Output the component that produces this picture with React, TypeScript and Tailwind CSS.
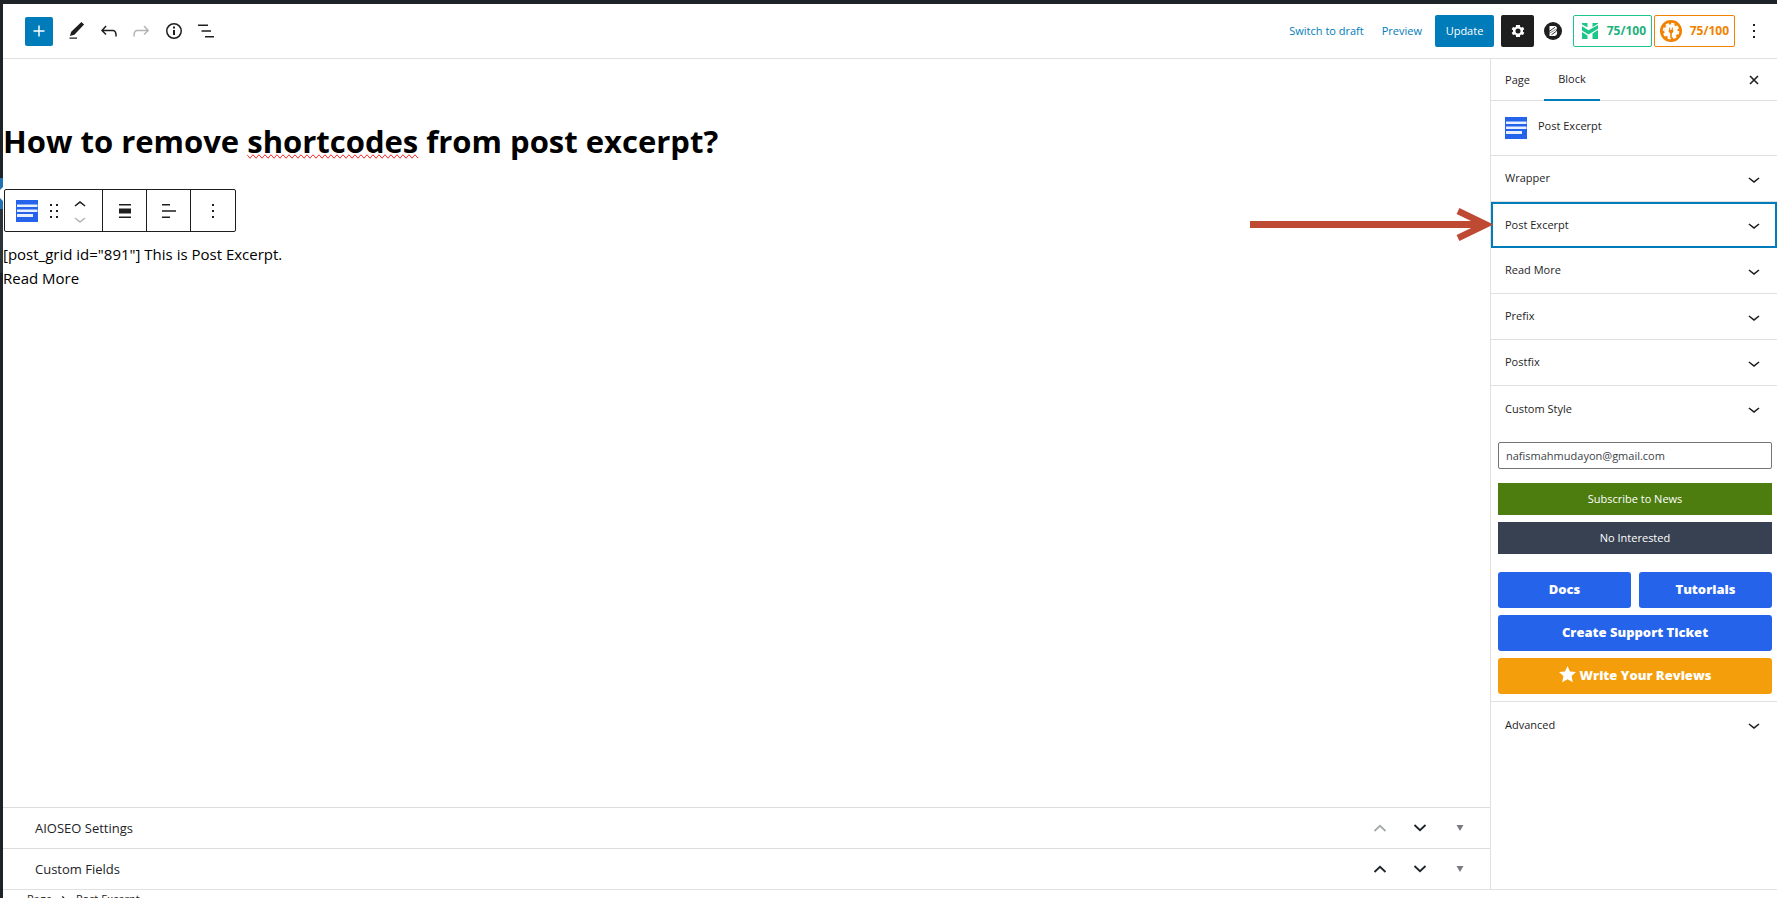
import type { ReactNode } from "react";

const font = "font-['Open_Sans','Noto_Sans',sans-serif]";

function Chevron({ up = false, className = "" }: { up?: boolean; className?: string }) {
  return (
    <svg viewBox="0 0 24 24" className={`size-6 ${className}`} fill="currentColor" aria-hidden="true">
      {up ? (
        <path d="M6.5 12.4L12 8l5.5 4.4-.9 1.2L12 10l-4.500 3.600-1-1.200z" />
      ) : (
        <path d="M17.500 11.600L12 16l-5.500-4.400.9-1.200L12 14l4.500-3.600 1 1.200z" />
      )}
    </svg>
  );
}

function ExcerptIcon() {
  return (
    <svg viewBox="0 0 22 22" className="size-[22px] shrink-0" aria-hidden="true">
      <rect width="22" height="22" fill="#2563eb" />
      <path d="M1 4.500h20.500v2.500H1zM1 9.500h20.500v2.500H1zM1 14h16v3H1z" fill="#e8effd" />
    </svg>
  );
}

function Tool({ label, children, className = "" }: { label: string; children: ReactNode; className?: string }) {
  return (
    <button type="button" aria-label={label} className={`flex size-8 items-center justify-center ${className}`}>
      {children}
    </button>
  );
}

function Row({ title, active = false, border = true }: { title: string; active?: boolean; border?: boolean }) {
  return (
    <div className={`h-[46px] ${border ? "border-b border-[#e0e0e0]" : ""}`}>
      <button
        type="button"
        className={`flex h-full w-full items-center justify-between pr-[11px] pl-3.5 text-left text-[11px] ${
          active ? "outline-2 -outline-offset-2 outline-[#007cba]" : ""
        }`}
      >
        {title}
        <Chevron />
      </button>
    </div>
  );
}

function MetaRow({ title, first = false }: { title: string; first?: boolean }) {
  return (
    <div className="flex h-[41px] items-center border-t border-[#dcdcde] pr-3.5 pl-8 text-[#1d2327]">
      <h2 className="grow pt-px text-[13px]">{title}</h2>
      <div className="flex items-center gap-2">
        <Tool label="Move up" className={first ? "text-[#a7aaad]" : ""}>
          <svg viewBox="0 0 14 8" className="h-2 w-3.5" fill="none" stroke="currentColor" strokeWidth="1.8"><path d="M1.5 7L7 1.8 12.5 7" /></svg>
        </Tool>
        <Tool label="Move down">
          <svg viewBox="0 0 14 8" className="h-2 w-3.5" fill="none" stroke="currentColor" strokeWidth="1.8"><path d="M1.5 1L7 6.2 12.5 1" /></svg>
        </Tool>
        <Tool label="Toggle panel" className="text-[#787c82]">
          <svg viewBox="0 0 8 6" className="h-1.5 w-2" fill="currentColor"><path d="M.5 0h7L4 6z" /></svg>
        </Tool>
      </div>
    </div>
  );
}

function Header() {
  return (
    <header className="flex h-[55px] items-center justify-between border-b border-[#e0e0e0] pr-[11px] pl-[22px]">
      <div className="flex items-center">
        <button type="button" aria-label="Add block" className="mr-2 flex h-[29px] w-7 items-center justify-center rounded-xs bg-[#007cba] text-white">
          <svg viewBox="0 0 24 24" className="size-[22px]" fill="currentColor"><path d="M18 11.200h-5.200V6h-1.600v5.200H6v1.600h5.200V18h1.600v-5.200H18z" /></svg>
        </button>
        <Tool label="Edit">
          <svg viewBox="0 0 24 24" className="size-6" fill="currentColor"><path d="M19.100 5.600L16.400 3 6.200 12.700l-1.300 4.400 4.500-1.300L19.100 5.600zM4.500 19.800h7.500v-1.300H4.500z" /></svg>
        </Tool>
        <Tool label="Undo">
          <svg viewBox="0 0 24 24" className="size-6" fill="currentColor"><path d="M18.300 11.700c-.6-.6-1.400-.9-2.300-.9H6.700l2.900-3.300-1.100-1-4.500 5L8.500 16l1-1-2.700-2.700H16c.5 0 .9.200 1.300.5 1 1 1 3.400 1 4.500v.3h1.500v-.2c0-1.500 0-4.300-1.500-5.700z" /></svg>
        </Tool>
        <Tool label="Redo" className="text-[#b5b5b5]">
          <svg viewBox="0 0 24 24" className="size-6" fill="currentColor"><path d="M15.600 6.500l-1.100 1 2.900 3.300H8c-.9 0-1.700.3-2.300.9-1.400 1.500-1.400 4.200-1.400 5.600v.2h1.500v-.3c0-1.100 0-3.500 1-4.500.3-.3.7-.5 1.300-.5h9.200L14.500 15l1.100 1.100 4.600-4.600-4.600-5z" /></svg>
        </Tool>
        <Tool label="Details" className="ml-px">
          <svg viewBox="0 0 24 24" className="size-6" fill="currentColor"><path d="M12 4a8 8 0 1 0 0 16 8 8 0 0 0 0-16zm0 14.500a6.500 6.500 0 1 1 0-13 6.500 6.500 0 0 1 0 13zM11 11h2v5h-2zm0-3.500h2v2h-2z" /></svg>
        </Tool>
        <Tool label="List view">
          <svg viewBox="0 0 24 24" className="size-6" fill="currentColor"><path d="M4 5.500h10V7H4zM7.500 11.200H17v1.500H7.500zM11 17h9v1.500h-9z" /></svg>
        </Tool>
      </div>
      <div className="flex items-center text-[11px]">
        <button type="button" className="mr-[18px] text-[#007cba]">Switch to draft</button>
        <a href="#preview" className="mr-[13px] text-[#007cba]">Preview</a>
        <button type="button" className="mr-[7px] h-8 w-[59px] rounded-xs bg-[#007cba] text-white">Update</button>
        <button type="button" aria-label="Settings" className="mr-[10px] flex h-8 w-[33px] items-center justify-center rounded-xs bg-[#1e1e1e] text-white">
          <svg viewBox="0 0 24 24" className="size-4" fill="currentColor" fillRule="evenodd"><path d="M19.400 13a7.500 7.500 0 0 0 0-2l2.100-1.650-2-3.460-2.500 1a7.500 7.500 0 0 0-1.700-1L14.900 3H9.100l-.4 2.900a7.500 7.500 0 0 0-1.700 1l-2.500-1-2 3.460L4.600 11a7.500 7.500 0 0 0 0 2l-2.100 1.650 2 3.460 2.500-1a7.500 7.500 0 0 0 1.700 1l.4 2.900h5.800l.4-2.900a7.500 7.500 0 0 0 1.700-1l2.500 1 2-3.460zM12 15.800a3.800 3.800 0 1 1 0-7.600 3.800 3.800 0 0 1 0 7.600z" /></svg>
        </button>
        <button type="button" aria-label="Block plugin" className="mr-[11px]">
          <svg viewBox="0 0 18 18" className="size-[18px]">
            <circle cx="9" cy="9" r="9" fill="#1e1e1e" />
            <path d="M5.500 4h5.200a2.500 2.500 0 0 1 1.200 4.600 3 3 0 0 1-1.200 5.400H5.500z" fill="#fff" />
            <path d="M5 9.500L11 5.300M7.500 12.700l4.500-3.200" stroke="#1e1e1e" strokeWidth=".9" />
            <path d="M5 11.500L13.500 6.500" stroke="#1e1e1e" strokeWidth=".5" />
          </svg>
        </button>
        <button type="button" className="mr-0.5 flex h-8 w-[79px] items-center justify-between rounded-xs border border-[#1cc588] pr-[5px] pl-2 text-xs font-bold text-[#22b07d]">
          <svg viewBox="0 0 16 16" className="size-4" fill="#1cc588"><path d="M0 0h5.500v4.300L0 1.500zM0 3.200l6.500 4L16 2v3.800l-9.500 5.700L0 7.500zM0 9l5.500 3.500V16H0zM10.500 0H16v.8l-5.500 3.200zM10.500 10.500L16 7v9h-5.500z" /></svg>
          75/100
        </button>
        <button type="button" className="mr-[7px] flex h-8 w-[81px] items-center justify-between rounded-xs border border-[#f18200] px-[5px] text-xs font-bold text-[#f18200]">
          <svg viewBox="0 0 22 22" className="size-[22px]">
            <circle cx="11" cy="11" r="11" fill="#f18200" />
            <circle cx="11" cy="11" r="6.800" fill="#fff" />
            <circle cx="11" cy="11" r="7.400" fill="none" stroke="#fff" strokeWidth="1.800" strokeDasharray="3.400 2.410" />
            <path d="M9.700 7.500v2.500M12.300 7.500v2.500" stroke="#f18200" strokeWidth="1" />
            <path d="M8.700 9.800h4.600v2l-1.500 1.600V18h-1.600v-4.600l-1.500-1.600z" fill="#f18200" />
          </svg>
          75/100
        </button>
        <button type="button" aria-label="Options">
          <svg viewBox="0 0 24 24" className="size-6" fill="currentColor"><path d="M13 19h-2v-2h2v2zm0-6h-2v-2h2v2zm0-6h-2V5h2v2z" /></svg>
        </button>
      </div>
    </header>
  );
}

function BlockToolbar() {
  return (
    <div role="toolbar" aria-label="Block tools" className="ml-px flex h-[43px] w-fit divide-x divide-[#1e1e1e] rounded-xs border border-[#1e1e1e]">
      <div className="flex w-[98px] items-center pl-[11px]">
        <button type="button" aria-label="Post Excerpt block"><ExcerptIcon /></button>
        <button type="button" aria-label="Drag" className="ml-1 flex size-6 items-center justify-center">
          <svg viewBox="0 0 8 14" className="h-3.5 w-2" fill="#1e1e1e"><path d="M0 0h2v2H0zM6 0h2v2H6zM0 6h2v2H0zM6 6h2v2H6zM0 12h2v2H0zM6 12h2v2H6z" /></svg>
        </button>
        <div className="ml-0.5 flex flex-col">
          <button type="button" aria-label="Move block up" className="flex h-4 w-6 items-center justify-center"><Chevron up className="shrink-0" /></button>
          <button type="button" aria-label="Move block down" className="flex h-3 w-6 items-center justify-center text-[#b5b5b5]"><Chevron className="shrink-0" /></button>
        </div>
      </div>
      <button type="button" aria-label="Align" className="flex w-11 items-center justify-center">
        <svg viewBox="0 0 24 24" className="size-6" fill="#1e1e1e"><path d="M6 5h12v1.500H6zM6 9.500h12v5H6zM6 17.500h12V19H6z" /></svg>
      </button>
      <button type="button" aria-label="Align text" className="flex w-11 items-center justify-center">
        <svg viewBox="0 0 24 24" className="size-6" fill="#1e1e1e"><path d="M5 5h8v1.500H5zM5 11.200h14v1.500H5zM5 17.500h8V19H5z" /></svg>
      </button>
      <button type="button" aria-label="More" className="flex w-11 items-center justify-center">
        <svg viewBox="0 0 24 24" className="size-6" fill="#1e1e1e"><path d="M13 19h-2v-2h2v2zm0-6h-2v-2h2v2zm0-6h-2V5h2v2z" /></svg>
      </button>
    </div>
  );
}

function Sidebar() {
  return (
    <aside className="w-[287px] shrink-0 border-l border-[#e0e0e0]">
      <div className="flex h-[42px] items-stretch justify-between border-b border-[#e0e0e0] pr-[11px] text-[11px]">
        <div className="-mb-px flex">
          <button type="button" className="w-[53px]">Page</button>
          <button type="button" className="w-14 border-b-2 border-[#007cba]">Block</button>
        </div>
        <button type="button" aria-label="Close">
          <svg viewBox="0 0 24 24" className="size-6" fill="none" stroke="currentColor" strokeWidth="1.600"><path d="M8 8l8 8M16 8l-8 8" /></svg>
        </button>
      </div>
      <div className="flex h-[55px] items-center gap-[11px] border-b border-[#e0e0e0] pl-3.5">
        <ExcerptIcon />
        <h2 className="pb-1 text-[11px]">Post Excerpt</h2>
      </div>
      <Row title="Wrapper" />
      <Row title="Post Excerpt" active border={false} />
      <Row title="Read More" />
      <Row title="Prefix" />
      <Row title="Postfix" />
      <Row title="Custom Style" border={false} />
      <div className="flex flex-col border-b border-[#e0e0e0] pt-2.5 pr-[5px] pb-[7px] pl-[7px] text-[11px]">
        <input aria-label="Email" type="email" defaultValue="nafismahmudayon@gmail.com" className="mb-3.5 h-[27px] w-full rounded-xs border border-[#757575] px-[7px] text-[#3c434a]" />
        <button type="button" className="mb-[7px] h-8 bg-[#4d7c0f] text-white">Subscribe to News</button>
        <button type="button" className="mb-[18px] h-8 bg-[#374151] text-white">No Interested</button>
        <div className="grid grid-cols-2 gap-x-2 gap-y-[7px] text-[13px] font-extrabold text-white">
          <a href="#docs" className="flex h-9 items-center justify-center rounded-[3px] bg-[#2563eb]">Docs</a>
          <a href="#tutorials" className="flex h-9 items-center justify-center rounded-[3px] bg-[#2563eb]">Tutorials</a>
          <a href="#support" className="col-span-2 flex h-9 items-center justify-center rounded-[3px] bg-[#2563eb]">Create Support Ticket</a>
          <a href="#reviews" className="col-span-2 flex h-9 items-center justify-center gap-1 rounded-[3px] bg-[#f59e0b]">
            <svg viewBox="0 0 16 16" className="mb-1 size-[17px]" fill="#fff"><path d="M8 0l2.300 5.100 5.700.6-4.200 3.800 1.200 5.700L8 12.400l-5 2.800 1.200-5.700L0 5.700l5.700-.6z" /></svg>
            Write Your Reviews
          </a>
        </div>
      </div>
      <Row title="Advanced" border={false} />
    </aside>
  );
}

export default function App() {
  return (
    <div className={`flex h-screen overflow-hidden border-t-4 border-[#1d2327] bg-white text-[#1e1e1e] ${font}`}>
      <div className="w-[3px] shrink-0 bg-[#1d2327] pt-[174px]">
        <svg viewBox="0 0 3 95" className="block h-[95px] w-[3px]" aria-hidden="true">
          <path d="M0 0h3v95H0z" fill="#2c3338" />
          <path d="M0 0h3v31H0z" fill="#2271b1" />
          <path d="M3 9L0 12v8l3 3z" fill="#fff" />
        </svg>
      </div>
      <div className="flex min-w-0 grow flex-col">
        <Header />
        <div className="flex min-h-0 grow">
          <main className="relative flex min-w-0 grow flex-col">
            <div className="grow">
              <h1 className="pt-[59px] text-[31px] leading-[46px] font-bold text-black">
                How to remove{" "}
                <span className="[text-decoration-line:spelling-error]">shortcodes</span> from post excerpt?
              </h1>
              <div className="mt-[25px]"><BlockToolbar /></div>
              <div className="mt-2.5 text-[15px] leading-6 text-black">
                <p>[post_grid id="891"] This is Post Excerpt.</p>
                <p><a href="#more">Read More</a></p>
              </div>
            </div>
            <MetaRow title="AIOSEO Settings" first />
            <MetaRow title="Custom Fields" />
            <svg viewBox="0 0 244 36" className="absolute top-[148px] -right-1 z-10 h-9 w-[244px]" aria-hidden="true">
              <path d="M0 17.500h232" stroke="#bf4a33" strokeWidth="7" />
              <path d="M208 4l28 13.500L208 31" stroke="#bf4a33" strokeWidth="6.500" fill="none" />
            </svg>
          </main>
          <Sidebar />
        </div>
        <footer className="h-[9px] shrink-0 overflow-hidden border-t border-[#e0e0e0] pl-6 text-[11px] leading-4">
          <nav aria-label="Breadcrumb" className="flex h-[18px] items-center">
            <span>Page</span>
            <svg viewBox="0 0 24 24" className="size-6 pt-1" fill="currentColor" aria-hidden="true"><path d="M10.600 6L9.400 7l4.600 5-4.600 5 1.200 1 5.400-6z" /></svg>
            <span>Post Excerpt</span>
          </nav>
        </footer>
      </div>
    </div>
  );
}
